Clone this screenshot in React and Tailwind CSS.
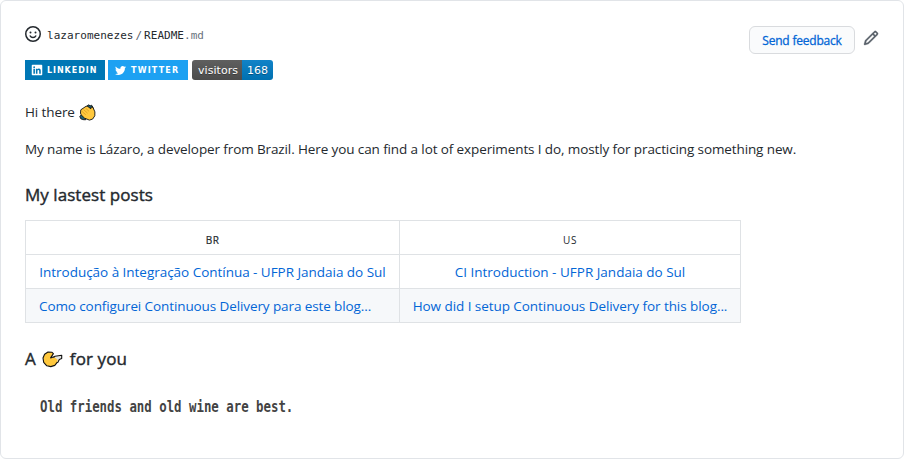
import React from "react";
import { FaLinkedin, FaTwitter } from "react-icons/fa";

function Smiley() {
  return (
    <svg width="16" height="16" viewBox="0 0 16 16" fill="none" stroke="#24292e" strokeWidth="1.5" strokeLinecap="round">
      <circle cx="8" cy="8" r="7.25" />
      <path d="M5.25 10S6 11.5 8 11.5s2.75-1.5 2.75-1.5" />
      <circle cx="5.5" cy="6.5" r="1" fill="#24292e" stroke="none" />
      <circle cx="10.5" cy="6.5" r="1" fill="#24292e" stroke="none" />
    </svg>
  );
}

function Pencil() {
  return (
    <svg width="16" height="16" viewBox="0 0 16 16" fill="#586069" stroke="#586069" strokeWidth=".3">
      <path
        fillRule="evenodd"
        d="M11.013 1.427a1.75 1.75 0 012.474 0l1.086 1.086a1.75 1.75 0 010 2.474l-8.61 8.61c-.21.21-.47.364-.756.445l-3.251.93a.75.75 0 01-.927-.928l.929-3.25a1.75 1.75 0 01.445-.758l8.61-8.61zm1.414 1.06a.25.25 0 00-.354 0L10.811 3.75l1.439 1.44 1.263-1.263a.25.25 0 000-.354l-1.086-1.086zM11.189 6.25L9.75 4.81l-6.286 6.287a.25.25 0 00-.064.108l-.558 1.953 1.953-.558a.249.249 0 00.108-.064l6.286-6.286z"
      />
    </svg>
  );
}

function Clap() {
  return (
    <svg className="ml-[4px] mt-px" width="17" height="17" viewBox="0 0 17 17">
      <path d="M7.6 2.6 9.4.8l1.8 1 1.4-.6 1.3 2 .6 2.2-2 1zM.8 12.4l1.8-1.8 4.6 3.2-.6 2-2.8-.2-2-.8z" fill="#1d6076" stroke="#111" strokeWidth=".9" />
      <path d="M1.5 9 1.8 5.8 7.2 2.2l1.6.2 3 2.4.4-1.9 1.8.6 1.9 4.4-.1 3.9-2.2 3.3-3.2 1-4.8-1.9-3.6-3.5z" fill="#ffc83d" stroke="#111" strokeWidth=".9" strokeLinejoin="round" />
      <path d="m3 7.4 3.8 3.4M4.6 5.6l3.9 3.5M6.6 4.1l3.5 3.3" stroke="#c98d1f" strokeWidth=".6" />
    </svg>
  );
}

function Point() {
  return (
    <svg className="ml-[6px] mr-[7px]" width="21" height="17" viewBox="0 0 21 17">
      <path d="M11.4 7.2 13 5.2l6.7-1v3.4l-2.4.8-1.4 2.8-1.6.6z" fill="#e4e4e0" stroke="#111" strokeWidth="1.1" strokeLinejoin="round" />
      <path d="M8.6 7 11.6 2.6 9.8 1.2 6 1 2.6 3.3 1 7l.7 4.4 3.1 3.4 4 .8 4-1.2 2.4-3.1.4-2.6-2.8-2.2z" fill="#ffc83d" />
      <path d="M12.6 5.4 8.6 6.9l2.8-4.3L9.8 1.2 6 1 2.6 3.3 1 7l.7 4.4 3.1 3.4 4 .8 4-1.2 2.6-3.2" fill="none" stroke="#111" strokeWidth="1.1" strokeLinejoin="round" />
    </svg>
  );
}

const cell = "flex items-center justify-center border-b border-r border-[#dfe2e5] pt-px whitespace-nowrap";

export default function App() {
  return (
    <div className="h-[460px] w-[905px] overflow-hidden bg-white font-['Open_Sans',sans-serif] text-[13.5px] text-[#24292e]">
      <main className="flex h-[459px] w-[904px] flex-col items-start rounded-md border border-[#e1e4e8] pl-6 pt-6">
        <header className="flex h-[35px] w-full items-start">
          <div className="mt-px flex h-4 items-center">
            <Smiley />
            <div className="ml-[6px] mt-[4px] font-['DejaVu_Sans_Mono',monospace] text-[11px] leading-4 whitespace-pre">
              <span className="tracking-[0.03px]">lazaromenezes</span>
              <span className="mx-[2px] text-[#586069]">/</span>
              <span className="tracking-[0.03px]">README</span>
              <span className="text-[#6a737d]">.md</span>
            </div>
          </div>
          <button className="ml-auto mt-px flex h-7 w-[106px] items-center justify-center rounded-md border border-[#d9dbde] bg-[#fafbfc] pt-[2px] text-[12px] tracking-[-0.2px] text-[#0366d6] [-webkit-text-stroke:0.3px_#0366d6]">
            Send feedback
          </button>
          <span className="ml-2 mr-6 mt-[5px]">
            <Pencil />
          </span>
        </header>

        <div className="flex h-5 font-['DejaVu_Sans',sans-serif] text-white">
          <div className="flex w-20 items-center bg-[#0077b5] pl-[6px] text-[8px] font-bold">
            <FaLinkedin className="size-[12px]" />
            <span className="ml-[4px] mt-px tracking-[0.95px]">LINKEDIN</span>
          </div>
          <div className="ml-[3px] flex w-20 items-center bg-[#1da1f2] pl-[7px] text-[8px] font-bold">
            <FaTwitter className="size-[11px]" />
            <span className="ml-[5px] mt-px tracking-[1.2px]">TWITTER</span>
          </div>
          <div className="ml-1 flex h-5 overflow-hidden rounded-[3px] text-[11px] leading-[21px] [text-shadow:0_1px_0_#01010150]">
            <span className="w-[50px] bg-linear-to-b from-[#5f5f5f] to-[#4c4c4c] pl-[6px] tracking-[0.05px]">visitors</span>
            <span className="w-[31px] bg-linear-to-b from-[#1183c8] to-[#0070b0] text-center">168</span>
          </div>
        </div>

        <p className="mt-[21px] flex h-[22px] items-center leading-[22px] tracking-[-0.1px]">
          Hi there
          <Clap />
        </p>
        <p className="mt-[15px] leading-[22px] tracking-[-0.11px] whitespace-nowrap">
          My name is Lázaro, a developer from Brazil. Here you can find a lot of experiments I do, mostly for practicing something new.
        </p>
        <h3 className="mt-[23px] text-[17px] leading-[24px] tracking-[0.05px] [-webkit-text-stroke:0.4px_#24292e]">My lastest posts</h3>

        <div className="mt-[13px] grid grid-cols-[374px_341px] grid-rows-[34px_34px_34px] border-l border-t border-[#dfe2e5]">
          <div className={cell}>
            <span className="mt-[5px] text-[10px] tracking-[0.5px] [-webkit-text-stroke:0.2px_#24292e]">BR</span>
          </div>
          <div className={cell}>
            <span className="mt-[5px] text-[10px] tracking-[0.5px]">US</span>
          </div>
          <a className={cell + " text-[#0366d6] tracking-[-0.03px]"}>Introdução à Integração Contínua - UFPR Jandaia do Sul</a>
          <a className={cell + " text-[#0366d6]"}>CI Introduction - UFPR Jandaia do Sul</a>
          <a className="flex items-center border-b border-r border-[#dfe2e5] bg-[#f6f8fa] pl-[13px] pt-px tracking-[-0.1px] whitespace-nowrap text-[#0366d6]">Como configurei Continuous Delivery para este blog...</a>
          <a className={cell + " bg-[#f6f8fa] text-[#0366d6] tracking-[-0.06px]"}>How did I setup Continuous Delivery for this blog...</a>
        </div>

        <h3 className="mt-[24px] flex h-6 items-center text-[17px] leading-6 tracking-[0.1px] [-webkit-text-stroke:0.4px_#24292e]">
          A
          <Point />
          for you
        </h3>
        <p className="ml-[15px] mt-[26px] origin-left scale-x-[0.825] font-['DejaVu_Sans_Mono',monospace] text-[15px] leading-5 font-bold whitespace-nowrap text-[#434343]">
          Old friends and old wine are best.
        </p>
      </main>
    </div>
  );
}
